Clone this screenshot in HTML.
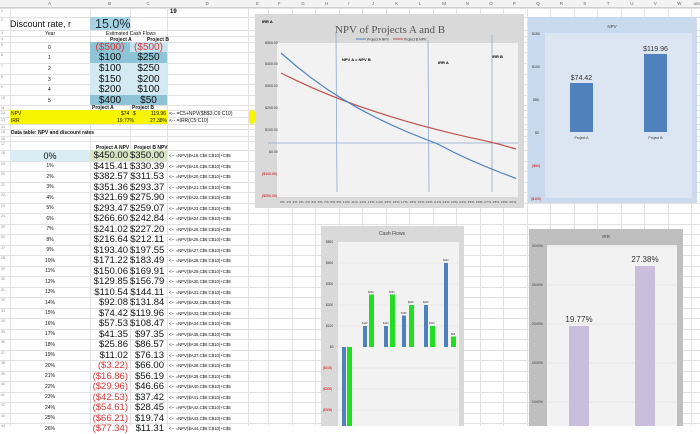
<!DOCTYPE html>
<html><head><meta charset="utf-8">
<style>
*{margin:0;padding:0;box-sizing:border-box}
body{width:700px;height:426px;overflow:hidden;background:#fff;font-family:"Liberation Sans",sans-serif;position:relative;color:#111}
.a{position:absolute;white-space:nowrap}
.hl{position:absolute;left:0;width:700px;height:1px;background:#e2e2e2}
.vl{position:absolute;top:0;width:1px;height:426px;background:#e2e2e2}
.s{font-size:5px}
.v{font-size:9.5px;text-align:right}
.red{color:#d23a3a}
</style></head><body>
<div id="g"></div>
<div class="a" style="left:0;top:0;width:700px;height:8px;background:#f3f3f3;border-bottom:1px solid #d0d0d0"></div>
<div id="hdr"></div>

<div class="a" style="left:90px;top:17px;width:40px;height:13px;background:#a9d3e3"></div>
<div class="a" style="left:95px;top:16.5px;font-size:12.5px;color:#1b2b3a">15.0%</div>
<div class="a" style="left:10px;top:19px;font-size:9px">Discount rate, r</div>
<div class="a" style="left:170px;top:9px;font-size:6px;font-weight:bold">19</div>
<div class="a s" style="left:45px;top:31px">Year</div>
<div class="a s" style="left:106px;top:31px">Estimated Cash Flows</div>
<div class="a s" style="left:110px;top:37px;font-weight:bold">Project A</div>
<div class="a s" style="left:147px;top:37px;font-weight:bold">Project B</div>
<div id="top"></div>
<div class="a s" style="left:92px;top:105px;font-weight:bold">Project A</div>
<div class="a s" style="left:132px;top:105px;font-weight:bold">Project B</div>
<div class="a" style="left:10px;top:110px;width:157px;height:14px;background:#f8f500"></div>
<div class="a" style="left:249px;top:110px;width:6px;height:14px;background:#f8f500;border-radius:3px"></div>
<div class="a s" style="left:11px;top:111px">NPV</div>
<div class="a s" style="left:11px;top:118px">IRR</div>
<div class="a s" style="left:121px;top:111px">$74</div>
<div class="a s" style="left:133px;top:111px">$</div>
<div class="a s" style="left:151px;top:111px">119.96</div>
<div class="a s" style="left:117px;top:118px">19.77%</div>
<div class="a s" style="left:150px;top:118px">27.38%</div>
<div class="a s" style="left:169px;top:111px">&lt;-- =C5+NPV($B$3,C6:C10)</div>
<div class="a s" style="left:169px;top:118px">&lt;-- =IRR(C5:C10)</div>
<div class="a s" style="left:11px;top:130px;font-weight:bold">Data table: NPV and discount rates</div>
<div class="a s" style="left:96px;top:145px;font-weight:bold">Project A NPV</div>
<div class="a s" style="left:134px;top:145px;font-weight:bold">Project B NPV</div>
<div class="a" style="left:10px;top:150px;width:80px;height:10.5px;background:#d9ecf3"></div>
<div class="a" style="left:90px;top:150px;width:77px;height:10.5px;background:#d8e4c4"></div>
<div id="tbl"></div>

<svg class="a" style="left:255px;top:14px" width="270" height="195" viewBox="255 14 270 195">
<rect x="255" y="14" width="269" height="194" fill="#d9d9d9"/>
<rect x="277" y="43" width="241" height="154" fill="#f2f2f2"/>
<text x="390" y="33" font-family="Liberation Serif" font-size="11" fill="#555" text-anchor="middle">NPV of Projects A and B</text>
<line x1="356" y1="39" x2="366" y2="39" stroke="#4f81bd" stroke-width="1"/><text x="367" y="40.5" font-size="3.5" fill="#333">Project A NPV</text>
<line x1="393" y1="39" x2="403" y2="39" stroke="#c0504d" stroke-width="1"/><text x="404" y="40.5" font-size="3.5" fill="#333">Project B NPV</text>
<text x="262" y="23" font-size="4" font-weight="bold">IRR A</text>
<text x="342" y="61" font-size="4" font-weight="bold">NPV A = NPV B</text>
<text x="438" y="64" font-size="4" font-weight="bold">IRR A</text>
<text x="492" y="58" font-size="4" font-weight="bold">IRR B</text>
<g font-size="3.5" fill="#333">
<text x="265" y="44">$500.00</text><text x="265" y="65">$400.00</text><text x="265" y="87">$300.00</text><text x="265" y="109">$200.00</text><text x="265" y="131">$100.00</text><text x="269" y="153">$0.00</text>
<text x="262" y="175" fill="#c00">($100.00)</text><text x="262" y="197" fill="#c00">($200.00)</text>
</g>
<line x1="268" y1="143" x2="518" y2="143" stroke="#8ea9cf" stroke-width="0.8"/>
<line x1="336" y1="32" x2="337" y2="192" stroke="#8ea9cf" stroke-width="0.8"/>
<line x1="428" y1="40" x2="429" y2="192" stroke="#8ea9cf" stroke-width="0.8"/>
<line x1="492" y1="35" x2="492" y2="192" stroke="#8ea9cf" stroke-width="0.8"/>
<polyline fill="none" stroke="#c0504d" stroke-width="1.2" points="281,73 296.7,80.7 312.3,87.8 328,94.4 343.7,100.6 359.3,106.3 375,111.6 390.7,116.6 406.3,121.3 422,125.7 437.7,129.8 453.3,133.7 469,137.3 484.7,140.7 500.3,144.5 516,149"/>
<polyline fill="none" stroke="#4f81bd" stroke-width="1.2" points="281,53 296.7,66.5 312.3,78.7 328,89.7 343.7,99.7 359.3,108.8 375,117 390.7,124.6 406.3,131.5 422,137.8 437.7,144 453.3,152 469,159.4 484.7,166.2 500.3,172.5 516,178.4"/>
<text x="280" y="203" font-size="3" fill="#333" textLength="236">0% 1% 2% 3% 4% 5% 6% 7% 8% 9% 10% 11% 12% 13% 14% 15% 16% 17% 18% 19% 20% 21% 22% 23% 24% 25% 26% 27% 28% 29% 30%</text>
</svg>

<svg class="a" style="left:528px;top:17px" width="170" height="187" viewBox="528 17 170 187">
<rect x="528" y="17" width="169" height="186" fill="#c9d9ee"/>
<rect x="545" y="33" width="147" height="165" fill="#dce6f2"/>
<text x="612" y="28" font-size="4.5" fill="#444" text-anchor="middle">NPV</text>
<g font-size="3.5" fill="#333"><text x="532" y="35">$150</text><text x="532" y="68">$100</text><text x="533" y="101">$50</text><text x="535" y="134">$0</text><text x="532" y="167" fill="#c00">($50)</text><text x="531" y="200" fill="#c00">($100)</text></g>
<rect x="570" y="83" width="23" height="49" fill="#4f81bd"/>
<rect x="644" y="54" width="23" height="78" fill="#4f81bd"/>
<text x="581.5" y="80" font-size="7" fill="#333" text-anchor="middle">$74.42</text>
<text x="655.5" y="51" font-size="7" fill="#333" text-anchor="middle">$119.96</text>
<text x="581.5" y="139" font-size="3.5" fill="#333" text-anchor="middle">Project A</text>
<text x="655.5" y="139" font-size="3.5" fill="#333" text-anchor="middle">Project B</text>
</svg>

<svg class="a" style="left:529px;top:229px" width="155" height="197" viewBox="529 229 155 197">
<rect x="529" y="229" width="154" height="197" fill="#bfbfbf"/>
<rect x="547" y="245" width="130" height="181" fill="#f2f2f2"/>
<g stroke="#dddddd" stroke-width="0.5"><line x1="547" y1="246" x2="677" y2="246"/><line x1="547" y1="285" x2="677" y2="285"/><line x1="547" y1="324" x2="677" y2="324"/><line x1="547" y1="363" x2="677" y2="363"/><line x1="547" y1="402" x2="677" y2="402"/></g>
<text x="606" y="238" font-size="4.5" fill="#444" text-anchor="middle">IRR</text>
<g font-size="3.2" fill="#333"><text x="532" y="247">30.00%</text><text x="532" y="286">25.00%</text><text x="532" y="325">20.00%</text><text x="532" y="364">15.00%</text><text x="532" y="403">10.00%</text></g>
<rect x="569" y="326" width="20" height="100" fill="#c9bfdc"/>
<rect x="635" y="266" width="20" height="160" fill="#c9bfdc"/>
<text x="579" y="322" font-size="8" fill="#333" text-anchor="middle">19.77%</text>
<text x="645" y="262" font-size="8" fill="#333" text-anchor="middle">27.38%</text>
</svg>

<svg class="a" style="left:321px;top:226px" width="144" height="200" viewBox="321 226 144 200">
<rect x="321" y="226" width="143" height="200" fill="#d9d9d9"/>
<rect x="338" y="242" width="121" height="184" fill="#f2f2f2"/>
<g stroke="#e2e2e2" stroke-width="0.5"><line x1="338" y1="263" x2="459" y2="263"/><line x1="338" y1="284" x2="459" y2="284"/><line x1="338" y1="305" x2="459" y2="305"/><line x1="338" y1="326" x2="459" y2="326"/><line x1="338" y1="368" x2="459" y2="368"/><line x1="338" y1="389" x2="459" y2="389"/><line x1="338" y1="410" x2="459" y2="410"/></g>
<text x="392" y="235" font-size="5" fill="#444" text-anchor="middle">Cash Flows</text>
<g font-size="3.2" fill="#333"><text x="326" y="243">$500</text><text x="326" y="264">$400</text><text x="326" y="285">$300</text><text x="326" y="306">$200</text><text x="326" y="327">$100</text><text x="330" y="348">$0</text><text x="323" y="369" fill="#c00">($100)</text><text x="323" y="390" fill="#c00">($200)</text><text x="323" y="411" fill="#c00">($300)</text></g>
<rect x="342" y="347" width="4" height="79" fill="#4f81bd"/><rect x="347" y="347" width="5" height="79" fill="#22dd22"/>
<rect x="363" y="326" width="4" height="21" fill="#4f81bd"/><rect x="369" y="294.5" width="5" height="52.5" fill="#22dd22"/>
<rect x="384" y="326" width="4" height="21" fill="#4f81bd"/><rect x="390" y="294.5" width="5" height="52.5" fill="#22dd22"/>
<rect x="402" y="315.5" width="4" height="31.5" fill="#4f81bd"/><rect x="409" y="305" width="5" height="42" fill="#22dd22"/>
<rect x="424" y="305" width="4" height="42" fill="#4f81bd"/><rect x="430" y="326" width="5" height="21" fill="#22dd22"/>
<rect x="444" y="263" width="4" height="84" fill="#4f81bd"/><rect x="451" y="336.5" width="5" height="10.5" fill="#22dd22"/>
<g font-size="2.5" fill="#333"><text x="362" y="324">$100</text><text x="368" y="293">$250</text><text x="383" y="324">$100</text><text x="389" y="293">$250</text><text x="401" y="314">$150</text><text x="408" y="303">$200</text><text x="423" y="303">$200</text><text x="429" y="324">$100</text><text x="443" y="261">$400</text><text x="451" y="335">$50</text></g>
</svg>

<script>
var g=document.getElementById('g'),h='';
var rows=[0,8,17,30,36,42,52,63,74,84,95,105,110,117,124,129,136,141,150];
for(var y=160.5;y<430;y+=10.5)rows.push(y);
rows.forEach(function(y,i){h+='<div class="hl" style="top:'+y+'px"></div>';if(i>0)h+='<div class="a" style="left:1px;top:'+(y+1)+'px;font-size:3.5px;color:#888">'+i+'</div>';});
var cols=[10,90,130,167,248];for(var x=268;x<700;x+=23.5)cols.push(x);
cols.forEach(function(x){h+='<div class="vl" style="left:'+x+'px"></div>';});
g.innerHTML=h;
var L="ABCDEFGHIJKLMNOPQRSTUVW",hd='';
for(var i=0;i<cols.length;i++){var a=cols[i],b=cols[i+1]||700;hd+='<div class="a" style="left:'+(a+(b-a)/2-2)+'px;top:1px;font-size:4.5px;color:#666">'+L[i]+'</div>';}
document.getElementById('hdr').innerHTML=hd;
var tp=[[42,52,'($500)','($500)',1,'#8fc4d6','#c7e3ee'],[52,63,'$100','$250',0,'#8fc4d6','#8fc4d6'],[63,74,'$100','$250',0,'#d4eaf2','#d4eaf2'],[74,84,'$150','$200',0,'#d4eaf2','#d4eaf2'],[84,95,'$200','$100',0,'#d4eaf2','#d4eaf2'],[95,105,'$400','$50',0,'#8fc4d6','#8fc4d6']],t='';
tp.forEach(function(r,i){t+='<div class="a" style="left:90px;top:'+r[0]+'px;width:40px;height:'+(r[1]-r[0])+'px;background:'+r[5]+'"></div><div class="a" style="left:130px;top:'+r[0]+'px;width:37px;height:'+(r[1]-r[0])+'px;background:'+r[6]+'"></div>';
t+='<div class="a" style="left:48px;top:'+(r[0]+3)+'px;font-size:5px">'+i+'</div>';
var c=r[4]?'color:#d23a3a':'';
t+='<div class="a" style="left:90px;width:40px;text-align:center;top:'+(r[0]-0.5)+'px;font-size:10px;'+c+'">'+r[2]+'</div><div class="a" style="left:130px;width:37px;text-align:center;top:'+(r[0]-0.5)+'px;font-size:10px;'+c+'">'+r[3]+'</div>';});
document.getElementById('top').innerHTML=t;
var A=['$450.00','$415.41','$382.57','$351.36','$321.69','$293.47','$266.60','$241.02','$216.64','$193.40','$171.22','$150.06','$129.85','$110.54','$92.08','$74.42','$57.53','$41.35','$25.86','$11.02','($3.22)','($16.86)','($29.96)','($42.53)','($54.61)','($66.21)','($77.34)'];
var B=['$350.00','$330.39','$311.53','$293.37','$275.90','$259.07','$242.84','$227.20','$212.11','$197.55','$183.49','$169.91','$156.79','$144.11','$131.84','$119.96','$108.47','$97.35','$86.57','$76.13','$66.00','$56.19','$46.66','$37.42','$28.45','$19.74','$11.31'];
var s='';
for(var i=0;i<27;i++){var y=150+i*10.5;
s+='<div class="a" style="left:10px;width:80px;text-align:center;top:'+(y+(i?2.5:0.5))+'px;font-size:'+(i?'5px':'9px')+'">'+i+'%</div>';
s+='<div class="a v'+(A[i][0]=='('?' red':'')+'" style="left:90px;width:38px;top:'+(y)+'px">'+A[i]+'</div>';
s+='<div class="a v" style="left:130px;width:34px;top:'+(y)+'px">'+B[i]+'</div>';
s+='<div class="a" style="left:169px;top:'+(y+3)+'px;font-size:4.3px">&lt;-- =NPV($A'+(18+i)+',C$6:C$10)+C$5</div>';}
document.getElementById('tbl').innerHTML=s;
</script>
</body></html>
